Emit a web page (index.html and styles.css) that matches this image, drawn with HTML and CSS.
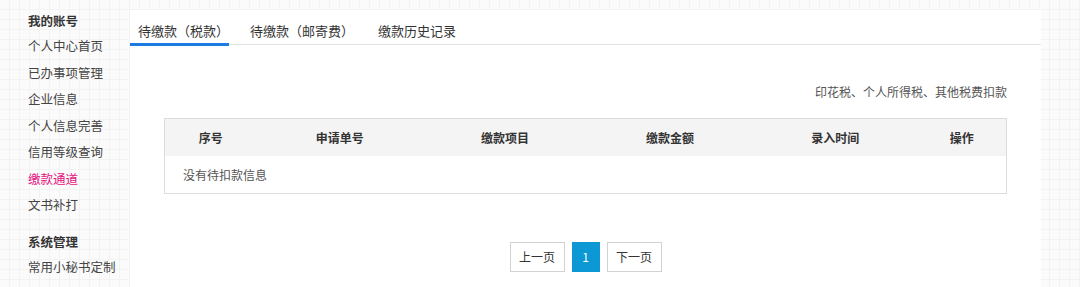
FILE: index.html
```html
<!DOCTYPE html>
<html lang="zh-CN">
<head>
<meta charset="utf-8">
<title>缴款通道</title>
<link rel="stylesheet" href="styles.css">
</head>
<body>
<div class="page">
  <aside class="sidebar">
    <div class="section">
      <div class="sec-title">我的账号</div>
      <a class="nav-item">个人中心首页</a>
      <a class="nav-item">已办事项管理</a>
      <a class="nav-item">企业信息</a>
      <a class="nav-item">个人信息完善</a>
      <a class="nav-item">信用等级查询</a>
      <a class="nav-item active">缴款通道</a>
      <a class="nav-item">文书补打</a>
    </div>
    <div class="section section-2">
      <div class="sec-title">系统管理</div>
      <a class="nav-item">常用小秘书定制</a>
    </div>
  </aside>
  <main class="panel">
    <nav class="tabs">
      <span class="tab tab-1 active">待缴款（税款）</span>
      <span class="tab tab-2">待缴款（邮寄费）</span>
      <span class="tab tab-3">缴款历史记录</span>
    </nav>
    <div class="content">
      <div class="note">印花税、个人所得税、其他税费扣款</div>
      <table class="grid">
        <colgroup>
          <col class="c1"><col class="c2"><col class="c3"><col class="c4"><col class="c5"><col class="c6">
        </colgroup>
        <thead>
          <tr><th>序号</th><th>申请单号</th><th>缴款项目</th><th>缴款金额</th><th>录入时间</th><th>操作</th></tr>
        </thead>
        <tbody>
          <tr><td colspan="6" class="empty">没有待扣款信息</td></tr>
        </tbody>
      </table>
      <div class="pager">
        <span class="pg-btn wide">上一页</span>
        <span class="pg-btn num current">1</span>
        <span class="pg-btn wide">下一页</span>
      </div>
    </div>
  </main>
</div>
</body>
</html>
```
FILE: styles.css
```css
* { box-sizing: border-box; }
html, body {
  margin: 0;
  padding: 0;
  height: 287px;
  overflow: hidden;
}
body {
  font-family: "Noto Sans CJK SC", "Microsoft YaHei", sans-serif;
  color: #333;
  background-color: #fbfbfb;
  background-image:
    linear-gradient(to right, #f3f3f3 1px, transparent 1px),
    linear-gradient(to bottom, #f3f3f3 1px, transparent 1px);
  background-size: 10px 10px;
  background-position: 9px 9px;
}
.page {
  display: flex;
  height: 287px;
}
.sidebar {
  flex: 0 0 130px;
  padding: 9px 0 0 28px;
  font-size: 12.5px;
}
.section { display: flex; flex-direction: column; }
.section-2 { margin-top: 11px; }
.sec-title {
  font-weight: bold;
  line-height: 24px;
  color: #333;
}
.nav-item {
  line-height: 26.5px;
  color: #444;
  white-space: nowrap;
}
.nav-item.active { color: #e5137e; }

.panel {
  flex: 0 0 911px;
  margin-top: 10px;
  background: #fff;
  display: flex;
  flex-direction: column;
}
.tabs {
  display: flex;
  height: 35px;
  border-bottom: 1px solid #e3e3e3;
  font-size: 13px;
}
.tab {
  height: 36px;
  margin-bottom: -2px;
  padding-top: 12px;
  line-height: 17px;
  color: #333;
  white-space: nowrap;
}
.tab-1 { padding-left: 8px; width: 99px; }
.tab-2 { margin-left: 21px; }
.tab-3 { margin-left: 24px; }
.tab.active { border-bottom: 3px solid #1b7be3; }

.content {
  padding: 38px 34px 0;
  display: flex;
  flex-direction: column;
}
.note {
  text-align: right;
  font-size: 12px;
  line-height: 18px;
  color: #555;
}
.grid {
  margin-top: 17px;
  width: 843px;
  border-collapse: collapse;
  border: 1px solid #dcdcdc;
  font-size: 12px;
}
.c1 { width: 92px; }
.c2 { width: 166px; }
.c3 { width: 164px; }
.c4 { width: 166px; }
.c5 { width: 164px; }
.c6 { width: 89px; }
.grid th {
  height: 37px;
  padding: 0;
  background: #f4f4f4;
  font-weight: bold;
  color: #333;
  text-align: center;
}
.grid td {
  height: 38px;
  padding: 0;
  color: #555;
}
.grid td.empty { padding-left: 18px; }

.pager {
  margin-top: 48px;
  display: flex;
  justify-content: center;
  gap: 7px;
  font-size: 12px;
}
.pg-btn {
  height: 30px;
  line-height: 28px;
  border: 1px solid #d2d2d2;
  background: #fff;
  color: #333;
  text-align: center;
}
.pg-btn.wide { width: 55px; }
.pg-btn.num { width: 28px; }
.pg-btn.current {
  background: #0c97d5;
  border-color: #0c97d5;
  color: #fff;
}
```
